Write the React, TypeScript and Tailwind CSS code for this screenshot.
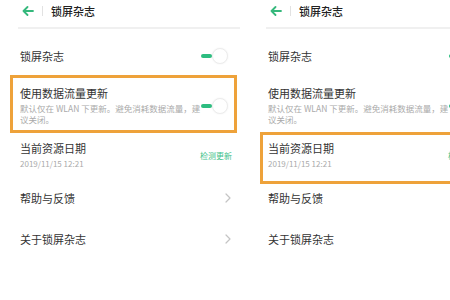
import React from "react";

const font = { fontFamily: '"Noto Sans CJK SC", "Noto Sans", sans-serif' };

function Toggle() {
  return (
    <div className="flex items-center mr-[4px]">
      <div className="h-[4px] w-[11px] rounded-full bg-[#2dbd80]" />
      <div className="h-[16px] w-[16px] rounded-full border border-[#ececec] bg-white shadow-[0_0_2px_rgba(0,0,0,0.06)]" />
    </div>
  );
}

function Chevron() {
  return (
    <svg width="6" height="10" viewBox="0 0 6 10" className="mr-[1px]">
      <polyline
        points="1,1 5,5 1,9"
        fill="none"
        stroke="#c4c4c4"
        strokeWidth="1.2"
        strokeLinecap="round"
        strokeLinejoin="round"
      />
    </svg>
  );
}

function Panel({ mark }: { mark: "data" | "date" }) {
  return (
    <div className="relative h-[300px] w-[240px] shrink-0 bg-white">
      <div className="flex h-[27px] items-center pb-[5px]">
        <svg width="12" height="10" viewBox="0 0 12 10" className="ml-[22px]">
          <path
            d="M11 5H1.5M5.5 1L1.5 5l4 4"
            fill="none"
            stroke="#35b87c"
            strokeWidth="1.8"
            strokeLinecap="round"
            strokeLinejoin="round"
          />
        </svg>
        <div className="ml-[8px] h-[10px] w-px bg-[#e2e2e2]" />
        <span className="ml-[8px] text-[11px] font-medium leading-[14px] text-[#222]">
          锁屏杂志
        </span>
      </div>
      <div className="ml-[18px] h-[2px] bg-[#f0f0f0]" />

      <div className="pl-[20px] pr-[8px]">
        <div className="flex h-[54px] items-center justify-between">
          <span className="text-[11px] leading-[14px] text-[#333]">锁屏杂志</span>
          <Toggle />
        </div>

        <div className="flex items-center justify-between pt-[3px]">
          <div className="w-[182px]">
            <div className="text-[11px] leading-[14px] text-[#333]">使用数据流量更新</div>
            <div className="mt-[3px] text-[8.5px] leading-[11px] text-[#aaa]">
              默认仅在 WLAN 下更新。避免消耗数据流量，建议关闭。
            </div>
          </div>
          <Toggle />
        </div>

        <div className="mt-[16px] flex items-center justify-between">
          <div>
            <div className="text-[11px] leading-[14px] text-[#333]">当前资源日期</div>
            <div className="mt-[3px] text-[8px] leading-[11px] text-[#aaa]">2019/11/15 12:21</div>
          </div>
          <span className="text-[8px] leading-[11px] text-[#3cbf8a]">检测更新</span>
        </div>

        <div className="mt-[22px] flex items-center justify-between">
          <span className="text-[11px] leading-[14px] text-[#333]">帮助与反馈</span>
          <Chevron />
        </div>

        <div className="mt-[27px] flex items-center justify-between">
          <span className="text-[11px] leading-[14px] text-[#333]">关于锁屏杂志</span>
          <Chevron />
        </div>
      </div>

      {mark === "data" ? (
        <div className="absolute left-[10px] top-[75px] h-[58px] w-[227px] border-[3px] border-[#eea23a]" />
      ) : (
        <div className="absolute left-[12px] top-[132px] h-[52px] w-[227px] border-[3px] border-[#eea23a]" />
      )}
    </div>
  );
}

export default function App() {
  return (
    <div className="flex h-[300px] w-[450px] gap-2 overflow-hidden bg-white" style={font}>
      <Panel mark="data" />
      <Panel mark="date" />
    </div>
  );
}
